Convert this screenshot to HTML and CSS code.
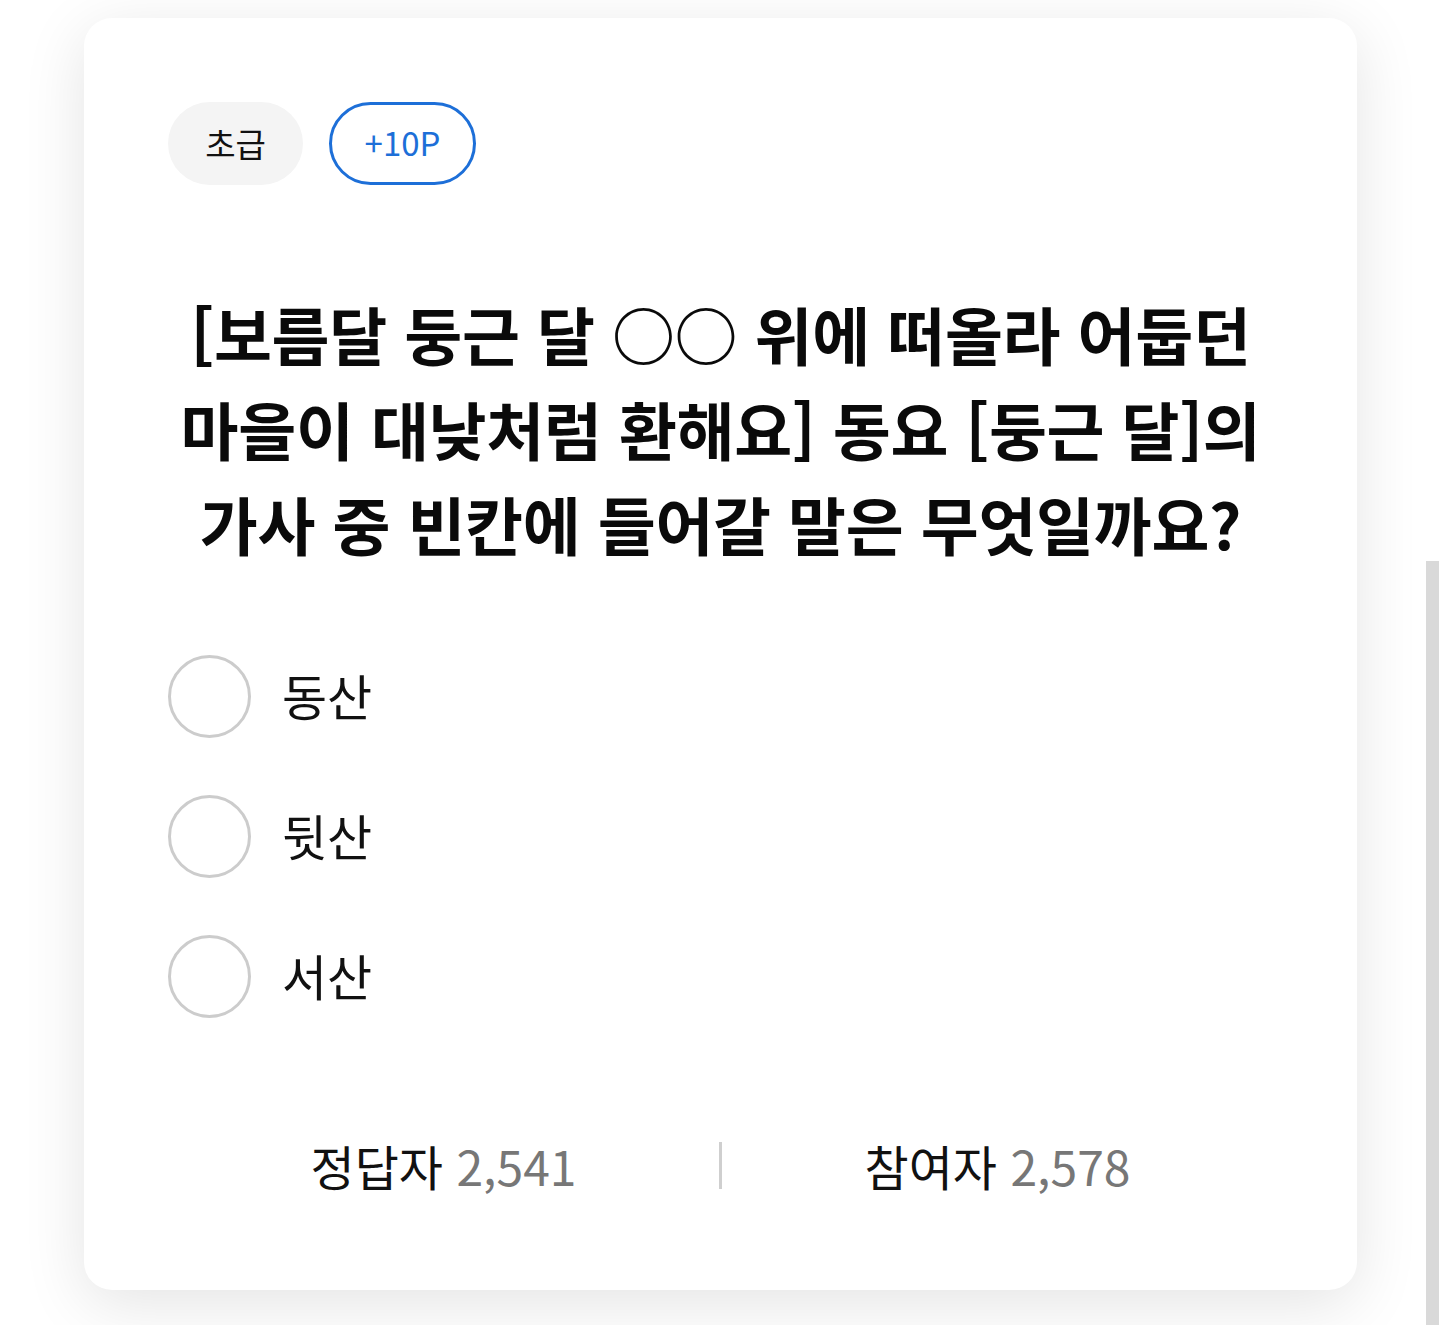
FILE: index.html
```html
<!DOCTYPE html>
<html lang="ko">
<head>
<meta charset="utf-8">
<link rel="stylesheet" href="styles.css">
</head>
<body>
<div class="page">
  <div class="card">
    <div class="tags">
      <span class="tag tag-level">초급</span>
      <span class="tag tag-point">+10P</span>
    </div>
    <h1 class="question">[보름달 둥근 달 ○○ 위에 떠올라 어둡던<br>마을이 대낮처럼 환해요] 동요 [둥근 달]의<br>가사 중 빈칸에 들어갈 말은 무엇일까요?</h1>
    <ul class="options">
      <li class="option"><span class="radio"></span><span class="option-text">동산</span></li>
      <li class="option"><span class="radio"></span><span class="option-text">뒷산</span></li>
      <li class="option"><span class="radio"></span><span class="option-text">서산</span></li>
    </ul>
    <div class="stats">
      <div class="stat"><span class="stat-label">정답자</span>&nbsp;<span class="stat-num">2,541</span></div>
      <div class="divider"></div>
      <div class="stat"><span class="stat-label">참여자</span>&nbsp;<span class="stat-num">2,578</span></div>
    </div>
  </div>
</div>
<div class="scrollbar"></div>
</body>
</html>
```
FILE: styles.css
```css
html, body {
  margin: 0;
  padding: 0;
  background: #ffffff;
  font-family: "Noto Sans CJK KR", "Noto Sans", sans-serif;
  color: #111;
}
.page {
  width: 1439px;
  height: 1325px;
  overflow: hidden;
  padding-top: 18px;
  box-sizing: border-box;
}
.card {
  margin-left: 84px;
  width: 1273px;
  height: 1272px;
  box-sizing: border-box;
  background: #fff;
  border-radius: 28px;
  box-shadow: 0 14px 64px rgba(0, 0, 0, 0.11);
  padding: 84px 84px 0 84px;
}
.tags {
  display: flex;
  gap: 26px;
}
.tag {
  display: inline-flex;
  align-items: center;
  justify-content: center;
  height: 83px;
  box-sizing: border-box;
  border-radius: 42px;
  font-size: 33px;
  line-height: 1;
}
.tag-level {
  width: 135px;
  background: #f4f4f4;
  color: #111;
}
.tag-point {
  width: 147px;
  border: 3px solid #1d6fd8;
  color: #1d6fd8;
  padding-bottom: 2px;
}
.question {
  margin: 100px 0 0 0;
  text-align: center;
  font-size: 63px;
  font-weight: 700;
  line-height: 95px;
  letter-spacing: -0.3px;
  color: #0a0a0a;
}
.options {
  list-style: none;
  margin: 85px 0 0 0;
  padding: 0;
  display: flex;
  flex-direction: column;
  gap: 57px;
}
.option {
  display: flex;
  align-items: center;
  height: 83px;
}
.radio {
  width: 83px;
  height: 83px;
  box-sizing: border-box;
  border: 3px solid #cccccc;
  border-radius: 50%;
  flex: none;
}
.option-text {
  margin-left: 31px;
  font-size: 49px;
  line-height: 1;
  color: #111;
  padding-bottom: 4px;
}
.stats {
  margin-top: 123px;
  display: flex;
  align-items: center;
  height: 48px;
}
.stat {
  flex: 1;
  display: flex;
  justify-content: center;
  font-size: 48px;
  line-height: 48px;
  white-space: nowrap;
}
.stat-label {
  color: #111;
}
.stat-num {
  color: #777;
}
.divider {
  width: 3px;
  height: 47px;
  background: #cfcfcf;
  flex: none;
}
.scrollbar {
  position: absolute;
  left: 1426px;
  top: 561px;
  width: 13px;
  height: 764px;
  background: #d9d9d9;
}
```
